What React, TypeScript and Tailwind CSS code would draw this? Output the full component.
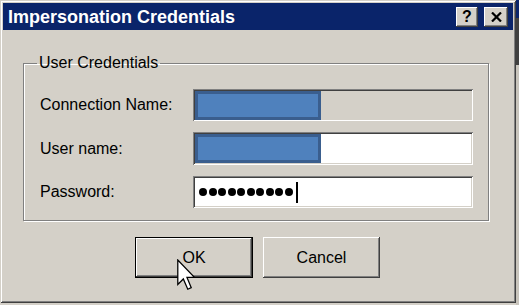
import React from 'react';

const raised =
  'bg-[#d4d0c8] shadow-[inset_-1px_-1px_0_#404040,inset_1px_1px_0_#ffffff,inset_-2px_-2px_0_#808080,inset_2px_2px_0_#d4d0c8]';
const sunken =
  'shadow-[inset_1px_1px_0_#808080,inset_-1px_-1px_0_#ffffff,inset_2px_2px_0_#404040,inset_-2px_-2px_0_#d4d0c8]';

const Redacted = () => (
  <div className="ml-[2px] h-[29px] w-[126px] border-[3px] border-[#3a5e8e] bg-[#4f81bd]"></div>
);

const App = () => {
  return (
    <div
      className="w-[519px] h-[305px] flex bg-[#d4d0c8] overflow-hidden text-black"
      style={{ fontFamily: '"Liberation Sans", Arial, sans-serif' }}
    >
      {/* Dialog window */}
      <div className="w-[516px] h-[303px] shrink-0 p-[3px] flex flex-col bg-[#d4d0c8] shadow-[inset_1px_1px_0_#d4d0c8,inset_-1px_-1px_0_#404040,inset_2px_2px_0_#ffffff,inset_-2px_-2px_0_#808080]">
        {/* Title bar */}
        <div className="h-[27px] bg-[#0a246a] flex items-center pl-[5px] pr-[5px]">
          <span className="text-white font-bold text-[18px] leading-none flex-1">Impersonation Credentials</span>
          <div className={`w-[22px] h-[20px] flex items-center justify-center ${raised}`}>
            <span className="font-bold text-[16px] leading-none">?</span>
          </div>
          <div className={`ml-[6px] w-[24px] h-[20px] flex items-center justify-center ${raised}`}>
            <svg width="11" height="10" viewBox="0 0 11 10">
              <path d="M1 0.5 L10 9.5 M10 0.5 L1 9.5" stroke="#000" strokeWidth="2.2" />
            </svg>
          </div>
        </div>

        {/* Group box */}
        <fieldset className="mt-[24px] ml-[20px] w-[466px] border border-[#808080] shadow-[1px_1px_0_#ffffff,inset_1px_1px_0_#ffffff] pl-[16px] pr-[15px] pt-[17px] pb-[12px]">
          <legend className="ml-[-3px] px-[2px] text-[16px] leading-[18px]">User Credentials</legend>
          <div className="flex flex-col gap-[11px]">
            <div className="flex items-center">
              <span className="w-[153px] text-[16px]">Connection Name:</span>
              <div className={`w-[280px] h-[32px] flex items-center bg-[#d4d0c8] ${sunken}`}>
                <Redacted />
              </div>
            </div>
            <div className="flex items-center">
              <span className="w-[153px] text-[16px]">User name:</span>
              <div className={`w-[280px] h-[33px] flex items-center bg-white ${sunken}`}>
                <Redacted />
              </div>
            </div>
            <div className="flex items-center">
              <span className="w-[153px] text-[16px]">Password:</span>
              <div className={`w-[280px] h-[32px] flex items-center bg-white pl-[6px] ${sunken}`}>
                <div className="flex gap-[1.5px]">
                  {Array.from({ length: 10 }).map((_, i) => (
                    <div key={i} className="w-[8px] h-[8px] rounded-full bg-black"></div>
                  ))}
                </div>
                <div className="ml-[3px] w-[2px] h-[21px] bg-black"></div>
              </div>
            </div>
          </div>
        </fieldset>

        {/* Buttons */}
        <div className="mt-[16px] ml-[132px] flex gap-[10px] relative">
          <div className="w-[118px] h-[41px] border border-black">
            <div className={`w-full h-full flex items-center justify-center text-[16px] ${raised}`}>OK</div>
          </div>
          <div className={`w-[117px] h-[41px] flex items-center justify-center text-[16px] ${raised}`}>Cancel</div>
          {/* Mouse pointer */}
          <svg className="absolute left-[42px] top-[22px]" width="19" height="32" viewBox="0 0 12 20">
            <polygon
              points="0.5,0.5 0.5,16 4,12.5 6.8,19 9,18 6.3,11.5 11,11.5"
              fill="#fff"
              stroke="#000"
              strokeWidth="0.8"
              strokeLinejoin="miter"
            />
          </svg>
        </div>
      </div>

      {/* Window behind, right edge */}
      <div className="flex-1 flex flex-col">
        <div className="h-[18px] bg-[#0a246a]"></div>
        <div className="h-[47px] bg-[#404040]"></div>
        <div className="flex-1 bg-[#c8c4bc]"></div>
      </div>
    </div>
  );
};

export default App;
